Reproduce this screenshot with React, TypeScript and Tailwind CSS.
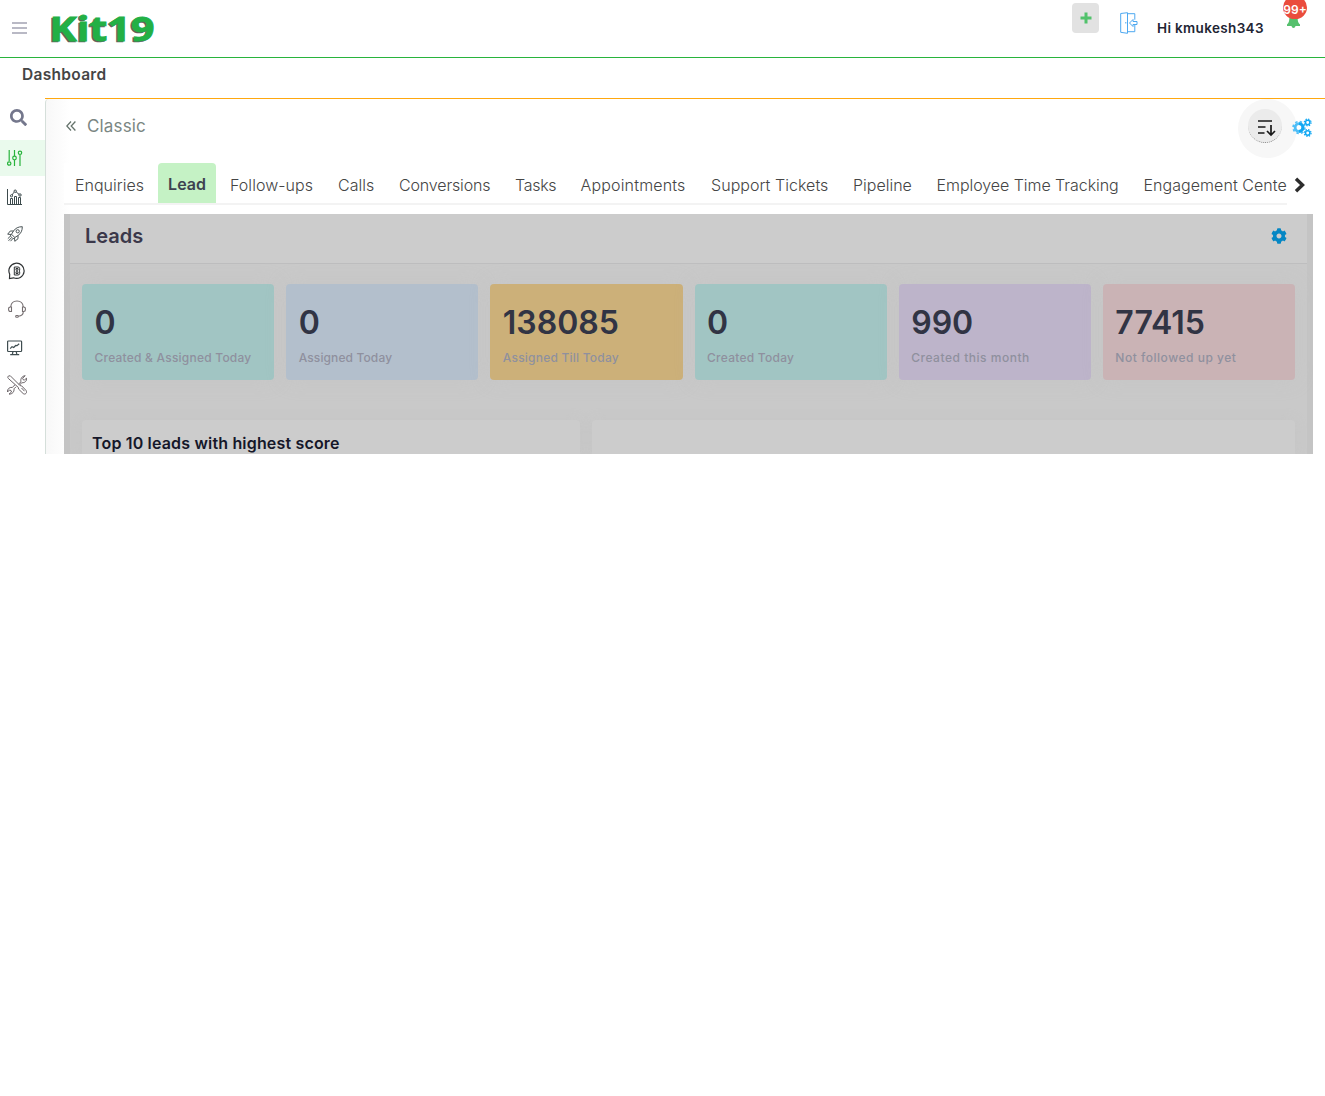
import { FaCog, FaPlus, FaSearch } from 'react-icons/fa';

const TABS = [
  { label: 'Enquiries', cls: 'w-[94px] pl-[11px]' },
  { label: 'Lead', cls: '', active: true },
  { label: 'Follow-ups', cls: 'w-[108px] pl-[14px] tracking-[0.05px]' },
  { label: 'Calls', cls: 'w-[61px] pl-[14px]' },
  { label: 'Conversions', cls: 'w-[116px] pl-[14px] tracking-[-0.15px]' },
  { label: 'Tasks', cls: 'w-[66px] pl-[14px] tracking-[-0.3px]' },
  { label: 'Appointments', cls: 'w-[130px] pl-[13.5px] tracking-[0.17px]' },
  { label: 'Support Tickets', cls: 'w-[142px] pl-[14px] tracking-[0.05px]' },
  { label: 'Pipeline', cls: 'w-[84px] pl-[14px]' },
  { label: 'Employee Time Tracking', cls: 'w-[207px] pl-[13.5px] tracking-[-0.05px]' },
  { label: 'Engagement Center', cls: 'w-[157px] overflow-hidden pl-[13.5px] tracking-[0.05px]' },
];

const STATS = [
  { value: '0', label: 'Created & Assigned Today', bg: 'bg-[#a1c5c3]', track: 'tracking-[0.22px]' },
  { value: '0', label: 'Assigned Today', bg: 'bg-[#b3bfcc]', track: 'tracking-[0.12px]' },
  { value: '138085', label: 'Assigned Till Today', bg: 'bg-[#ccb079]', track: 'tracking-[0.22px]' },
  { value: '0', label: 'Created Today', bg: 'bg-[#a1c5c3]', track: 'tracking-[0.25px]' },
  { value: '990', label: 'Created this month', bg: 'bg-[#bdb4ca]', track: 'tracking-[0.52px]' },
  { value: '77415', label: 'Not followed up yet', bg: 'bg-[#cab3b5]', track: 'tracking-[0.52px]' },
];

function Sliders() {
  return (
    <svg className="w-4 h-4" viewBox="0 0 16 16" fill="none" stroke="#28b43c" strokeWidth="1.2">
      <path d="M2.2 0v11M7.500 0v6M7.500 10v6M13 5v11" />
      <circle cx="2.2" cy="13.5" r="1.700" />
      <circle cx="7.500" cy="8" r="1.800" />
      <circle cx="13" cy="2.800" r="1.700" />
    </svg>
  );
}

function BarChart() {
  return (
    <svg className="w-4 h-4" viewBox="0 0 16 16" fill="none" stroke="#3c4a4c" strokeWidth="1">
      <path d="M.5 0v15.500H15M3.500 15V9.500h2V15M7.500 15V7.500h2V15M11.500 15V8.500h2V15" />
      <path d="M5 6l2-2.800M9.200 3l2.800 2.300" />
      <circle cx="4.500" cy="6.800" r="1.100" />
      <circle cx="8.200" cy="2.200" r="1.200" />
      <circle cx="13" cy="6" r="1.200" />
    </svg>
  );
}

function Rocket() {
  return (
    <svg className="w-4 h-4" viewBox="0 0 16 16" fill="none" stroke="#4b5557" strokeWidth="1">
      <path d="M15.300.7c-4 0-6.700 1.300-8.800 4.300l-2 3.200 3.300 3.300 3.200-2c3-2.100 4.300-4.800 4.300-8.800z" />
      <path d="M6.500 5H3.300L.7 8.200l3.600.3M11 9.500v3.200l-3.200 2.600-.3-3.600M4.300 8.500l-1 1.500 2.800 2.800 1.500-1M3 10.500L.8 12.700M4.200 12L1.500 14.800M5.500 13l-2 2.200" />
      <circle cx="10.700" cy="5.300" r="1.600" />
    </svg>
  );
}

function ChatB() {
  return (
    <svg className="w-[18px] h-[18px]" viewBox="0 0 18 18" fill="none" stroke="#2f3234" strokeWidth="1.200">
      <path d="M1.500 16.500l.2-4.300A7.600 7.600 0 1 1 5.500 15.800z" />
      <path strokeWidth="1" d="M6.300 5h3.700q1.700 0 1.700 1.700v1.500l-.5.800.5.800v1.500q0 1.700-1.700 1.700H6.300zM8 6.500h2v1.700H8zM8 9.800h2v1.700H8z" />
    </svg>
  );
}

function Headset() {
  return (
    <svg className="w-[18px] h-[18px] -mt-0.5" viewBox="0 0 18 18" fill="none" stroke="#756e70" strokeWidth="1.100">
      <path d="M2.700 7C3 3.300 5.600 1 9 1s6 2.300 6.300 6M15.300 11.500c0 3-2 4.500-5 4.800" />
      <path d="M3.500 7H2.300a1.700 1.700 0 0 0-1.700 1.700v1.100a1.700 1.700 0 0 0 1.700 1.700h1.200zM14.500 7h1.200a1.700 1.700 0 0 1 1.700 1.700v1.100a1.700 1.700 0 0 1-1.700 1.700h-1.200z" />
      <rect x="7.700" y="15.500" width="2.600" height="1.700" rx=".8" />
    </svg>
  );
}

function Monitor() {
  return (
    <svg className="w-4 h-4" viewBox="0 0 16 16" fill="none" stroke="#3f4d50" strokeWidth="1.200">
      <rect x=".6" y="1" width="14" height="10.500" rx=".8" />
      <path d="M6 11.500l-.6 2.500M9.200 11.500l.6 2.500M3.200 14.700h9M3.200 8.700l1.800-2 1.700.8 2-2 1.300.2 2.200-2" />
    </svg>
  );
}

function Tools() {
  return (
    <svg className="w-5 h-5" viewBox="0 0 20 20" fill="none" stroke="#6b6468" strokeWidth="1">
      <path d="M1.200 1.200l2-.5 9.900 9.900 1.600.3 4.300 4.500c1 1 .8 2.200 0 3s-2 1-3 0l-4.400-4.300-.3-1.700L1.400 3.500c-.8-.8-.8-1.700-.2-2.300z" />
      <path d="M11.600 9L14 6.800c-.8-2.700.8-5.800 4.200-6.100l-2.600 2.600.5 1.300 1.300.6 2.300-2.300c.3 3-1.800 5.200-5 4.800l-2.200 2.500M9 11.800l-2 2c.4 3-1.700 5.500-5 5.300L4.500 17l-.5-1.500-1.500-.5L.5 17c-.3-3 1.800-5 4.800-4.600L8 9.800" />
      <path d="M14.500 13l3 3.200" />
    </svg>
  );
}

// One big gear with two small ones to its right
function Gears() {
  return (
    <svg className="w-5 h-5" viewBox="0 0 20 20" fill="none" stroke="#11a8f3">
      <g stroke="#4fbef7">
        <circle cx="7" cy="9.500" r="3.900" strokeWidth="2.800" />
        <circle cx="7" cy="9.500" r="5.900" strokeWidth="1.700" strokeDasharray="2.400 2.234" />
      </g>
      <path d="M7 5.600a3.900 3.900 0 0 1 0 7.800" strokeWidth="2.800" />
      <circle cx="15.700" cy="4.500" r="2.200" strokeWidth="1.500" />
      <circle cx="15.700" cy="4.500" r="3.400" strokeWidth="1.200" strokeDasharray="1.400 1.270" />
      <circle cx="15.700" cy="15" r="2.200" strokeWidth="1.500" />
      <circle cx="15.700" cy="15" r="3.400" strokeWidth="1.200" strokeDasharray="1.400 1.270" />
    </svg>
  );
}

const SIDE_ITEMS = [
  { icon: Sliders, cls: 'h-9 pl-[7px] bg-[#eafaed]' },
  { icon: BarChart, cls: 'h-[41px] pl-[7px]' },
  { icon: Rocket, cls: 'h-[34px] pl-[7px]' },
  { icon: ChatB, cls: 'h-10 pl-2' },
  { icon: Headset, cls: 'h-[37px] pl-2' },
  { icon: Monitor, cls: 'h-10 pl-[7px]' },
  { icon: Tools, cls: 'h-[34px] pl-[7px]' },
];

function Header() {
  return (
    <header className="h-[58px] border-b border-[#28b43c] flex items-start">
      <div className="w-[15px] ml-3 mt-[22px] flex flex-col gap-[3px]">
        <div className="h-0.5 bg-[#b9b9c5]" />
        <div className="h-0.5 bg-[#b9b9c5]" />
        <div className="h-0.5 bg-[#b9b9c5]" />
      </div>
      <svg className="ml-[17px] w-[118px] h-[56px] overflow-visible" viewBox="0 0 118 56">
        <g fontFamily="Open Sans" fontWeight="700" fontSize="34">
          <text x="4" y="41.500" textLength="105" lengthAdjust="spacingAndGlyphs" fill="#5c5c5c" stroke="#5c5c5c" strokeWidth=".6">Kit19</text>
          <text x="5.500" y="40.500" textLength="105" lengthAdjust="spacingAndGlyphs" fill="#22b045" stroke="#22b045" strokeWidth=".8">Kit19</text>
        </g>
      </svg>
      <div className="ml-auto flex items-start pr-[18px]">
        <button className="w-[27px] h-[30px] mt-[3px] rounded bg-[#e2e2e2] flex items-center justify-center">
          <svg className="w-3 h-3" viewBox="0 0 12 12" fill="#51c26b">
            <path d="M4.500.5h3v4h4v3h-4v4h-3v-4h-4v-3h4z" />
          </svg>
        </button>
        <svg className="w-[18px] h-[22px] ml-[21px] mt-3" viewBox="0 0 18 22" fill="none" stroke="#4da8f0" strokeWidth="1">
          <path d="M.7 1.500L7.500.7v20.600L.7 20.300zM7.500 1.700h7.300v6M14.800 13v6.700H7.500M5.800 10v1.500" />
          <path d="M9.500 11l3.500-3.500v2h4v3h-4v2z" />
        </svg>
        <span className="w-[145px] pl-[19px] mt-[19px] text-[13.5px] leading-[18px] font-semibold tracking-[0.35px] text-[#212433] whitespace-nowrap">Hi kmukesh343</span>
        <div className="relative w-6 h-7">
          <svg className="absolute left-1 top-3.5 w-[13px] h-[14px]" viewBox="0 0 13 14" fill="#55c06d">
            <path d="M2.500 0h8c0 6 .3 9 2.500 10.500V12H8.500c-.3 1.300-1 2-2 2s-1.700-.7-2-2H0v-1.500C2.200 9 2.500 6 2.500 0z" />
          </svg>
          <span className="absolute left-0 -top-1 w-6 h-[23px] rounded-full bg-[#ea4c3d] text-white text-[12px] font-semibold flex items-center justify-center pt-1">99+</span>
        </div>
      </div>
    </header>
  );
}

function TabBar() {
  return (
    <div className="mt-[4px] h-[42px] flex bg-white">
      <div className="w-[1223px] h-[42px] flex border-b-2 border-[#f3f3f3]">
        {TABS.map(t => t.active ? (
          <div key={t.label} className="w-[58px] h-10 shrink-0 rounded-t bg-[#c5f2c5] text-center text-base leading-[43px] font-semibold text-[#3e4350]">{t.label}</div>
        ) : (
          <div key={t.label} className={`h-10 shrink-0 whitespace-nowrap text-base leading-[45px] font-light text-[#454545] ${t.cls}`}>{t.label}</div>
        ))}
      </div>
      <svg className="ml-[7px] mt-[14px] w-3 h-4" viewBox="0 0 12 16" fill="none" stroke="#2c2c2c" strokeWidth="3.400">
        <path d="M2 1.800L8.500 8 2 14.200" />
      </svg>
    </div>
  );
}

function LeadsPanel() {
  return (
    <section className="mt-[9px] w-[1249px] h-60 bg-[#c4c4c4] px-1.5 overflow-hidden">
      <div className="h-60 bg-[#c9c9c9]">
        <div className="h-[50px] bg-[#cccccc] border-b border-[#bebebf] flex justify-between pl-[15px] pr-5">
          <h2 className="text-[20px] leading-[44px] font-semibold text-[#3b384a]">Leads</h2>
          <FaCog className="mt-[13.5px] w-4 h-4 text-[#0587c4]" />
        </div>
        <div className="mt-5 px-3 grid grid-cols-6 gap-3">
          {STATS.map(s => (
            <div key={s.label} className={`h-24 rounded pl-[12.5px] pt-[18px] whitespace-nowrap shadow-[0_0_20px_#bfbfbf50] ${s.bg}`}>
              <div className="text-[32px] leading-[41px] font-semibold text-[#313444]">{s.value}</div>
              <div className={`mt-1.5 text-[12px] leading-[18px] font-medium text-[#8f909e] ${s.track}`}>{s.label}</div>
            </div>
          ))}
        </div>
        <div className="mt-10 px-3 flex gap-3">
          <div className="w-[498px] h-[34px] rounded-t bg-[#cccccc] pl-[10px] shadow-[0_0_12px_#bfbfbf50]">
            <h3 className="text-base leading-[47px] font-semibold tracking-[0.17px] text-[#151729] whitespace-nowrap">Top 10 leads with highest score</h3>
          </div>
          <div className="flex-1 h-[34px] rounded-t bg-[#cccccc] shadow-[0_0_12px_#bfbfbf50]" />
        </div>
      </div>
    </section>
  );
}

export default function App() {
  return (
    <div className="w-[1325px] h-[1096px] bg-white overflow-hidden font-['Inter',sans-serif]">
      <Header />
      <div className="h-10 pl-[22px] text-[15.5px] leading-[33px] font-semibold tracking-[0.3px] text-[#454545]">Dashboard</div>
      <div className="flex h-[356px]">
        <aside className="w-[45px] shrink-0">
          <div className="h-[42px] pl-[10px] pt-[11px]">
            <FaSearch className="w-[17px] h-[17px] text-[#74778c]" />
          </div>
          {SIDE_ITEMS.map(({ icon: Icon, cls }, i) => (
            <div key={i} className={`flex items-center ${cls}`}><Icon /></div>
          ))}
        </aside>
        <main className="flex-1 h-[356px] border-t border-t-[#ffa80f]">
          <div className="h-[355px] border-l border-[#d5dfda] rounded-tl bg-linear-to-r from-[#f8f8f8] to-white to-[24px] pl-[18px]">
            <div className="h-[60px] flex">
              <svg className="w-[10px] h-[10px] mt-[22px] ml-0.5" viewBox="0 0 10 10" fill="none" stroke="#65736b" strokeWidth="1.300">
                <path d="M5 .5L.8 5 5 9.500M9.400.5L5.200 5l4.200 4.500" />
              </svg>
              <span className="ml-[11px] text-[17px] leading-[55px] tracking-[0.15px] text-[#7b8783]">Classic</span>
              <div className="ml-auto mr-7 w-[59px] h-[59px] rounded-full bg-[#f7f7f7] pl-[10px] pt-[10px]">
                <div className="w-[34px] h-[34px] rounded-full bg-[#ebebeb] border-b border-dotted border-[#888888]">
                  <svg className="w-[34px] h-[34px]" viewBox="0 0 34 34" fill="none" stroke="#171717" strokeWidth="1.700">
                    <path d="M10 12h14M10 18h7.500M10 24h6.500M23 16v10M19 22l4 4 4-4" />
                  </svg>
                </div>
              </div>
              <div className="w-0 mt-[19px]"><div className="-ml-[33px] w-5"><Gears /></div></div>
            </div>
            <TabBar />
            <LeadsPanel />
          </div>
        </main>
      </div>
    </div>
  );
}
